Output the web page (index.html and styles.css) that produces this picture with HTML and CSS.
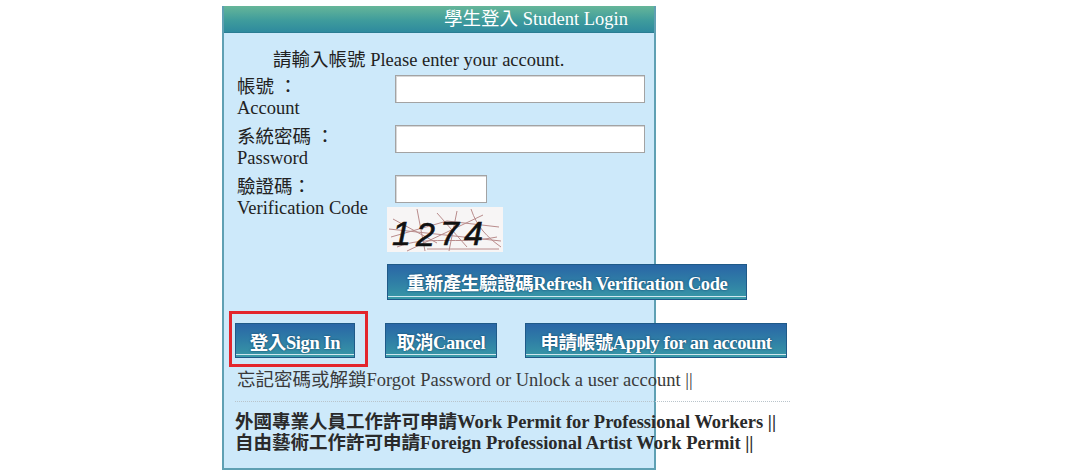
FILE: index.html
```html
<!DOCTYPE html>
<html>
<head>
<meta charset="utf-8">
<title>學生登入 Student Login</title>
<link rel="stylesheet" href="styles.css">
</head>
<body>
<div class="panel">
  <div class="panel-head">學生登入 Student Login</div>
  <div class="panel-body">
    <div class="intro">請輸入帳號 Please enter your account.</div>
    <div class="form-row">
      <div class="label">帳號 ：<br>Account</div>
      <div class="field"><input class="text-input wide" type="text"></div>
    </div>
    <div class="form-row">
      <div class="label">系統密碼 ：<br>Password</div>
      <div class="field"><input class="text-input wide" type="password"></div>
    </div>
    <div class="form-row last">
      <div class="label">驗證碼：<br>Verification Code</div>
      <div class="field">
        <input class="text-input short" type="text">
        <svg class="captcha" width="116" height="45" viewBox="0 0 116 45">
          <rect width="116" height="45" fill="#f7f5f5"/>
          <g stroke="#b98c8c" stroke-width="1" fill="none">
            <path d="M4 30 L60 14 L112 20"/>
            <path d="M10 40 C40 28 70 38 110 30"/>
            <path d="M30 2 L38 44"/>
            <path d="M50 6 L80 40"/>
            <path d="M2 22 L114 34"/>
            <path d="M70 4 L62 44"/>
            <path d="M20 44 L96 8"/>
            <path d="M84 2 C90 20 100 30 114 40"/>
            <path d="M6 12 L50 36"/>
            <path d="M40 42 L112 42"/>
          </g>
          <g font-family="'Liberation Sans', sans-serif" font-style="italic" font-size="34" fill="#111" stroke="#111" stroke-width="0.6">
            <text x="5" y="38">1</text>
            <text x="29" y="39">2</text>
            <text x="53" y="38">7</text>
            <text x="77" y="38">4</text>
          </g>
        </svg>
        <button class="btn refresh" type="button">重新產生驗證碼Refresh Verification Code</button>
      </div>
    </div>
    <div class="btn-row">
      <span class="highlight"><button class="btn" type="button">登入Sign In</button></span>
      <button class="btn cancel" type="button">取消Cancel</button>
      <button class="btn apply" type="button">申請帳號Apply for an account</button>
    </div>
    <div class="forgot">忘記密碼或解鎖Forgot Password or Unlock a user account ||</div>
    <div class="divider"></div>
    <div class="links">
      <div>外國專業人員工作許可申請Work Permit for Professional Workers ||</div>
      <div>自由藝術工作許可申請Foreign Professional Artist Work Permit ||</div>
    </div>
  </div>
</div>
</body>
</html>
```

FILE: styles.css
```css
html, body {
  margin: 0;
  padding: 0;
  background: #ffffff;
}
body {
  font-family: "Liberation Serif", "Times New Roman", "Noto Sans CJK TC", serif;
  font-size: 18.5px;
  line-height: 21px;
  color: #222;
}
.panel {
  margin: 6px 0 0 222px;
  width: 430px;
  border: 2px solid #5fa0b3;
  border-top: 0;
  background: #cde9fa;
}
.panel-head {
  height: 26px;
  line-height: 27px;
  border-bottom: 1px solid #2a7d93;
  background: linear-gradient(#66b699, #3f9c9c 55%, #2e8a9e);
  color: #fff;
  text-align: right;
  padding-right: 26px;
}
.panel-body {
  padding: 17px 0 14px 13px;
}
.intro {
  padding-left: 36px;
  margin-bottom: 4px;
}
.form-row {
  display: flex;
  height: 50px;
}
.form-row.last {
  height: auto;
}
.label {
  width: 150px;
  flex: none;
  padding-top: 2px;
  white-space: nowrap;
}
.field {
  display: flex;
  flex-direction: column;
  align-items: flex-start;
}
.text-input {
  box-sizing: border-box;
  height: 28px;
  margin: 0 0 0 8px;
  border: 1px solid #a3a3a3;
  box-shadow: inset 1px 1px 0 #d8d8d8;
  background: #fff;
}
.text-input.wide { width: 250px; }
.text-input.short { width: 92px; }
.captcha {
  display: block;
  margin-top: 4px;
}
.btn {
  box-sizing: border-box;
  height: 35px;
  padding: 0 8px;
  border: 1px solid #1f5a88;
  background: linear-gradient(#2a66a6, #2f7ea6 50%, #3898a6);
  box-shadow: inset 0 -2px 0 #3a9aa8, inset 0 -3px 0 #cfe6ee;
  color: #fff;
  font-family: "Liberation Serif", "Times New Roman", "Noto Sans CJK TC", serif;
  font-size: 18.5px;
  font-weight: bold;
  letter-spacing: -0.4px;
  text-shadow: 0 0 2px #0d3a60;
  white-space: nowrap;
  cursor: pointer;
}
.btn.refresh {
  margin-top: 12px;
  height: 36px;
  width: 360px;
}
.btn-row {
  display: flex;
  align-items: flex-start;
  margin-top: 11px;
  width: 600px;
}
.highlight {
  display: block;
  margin-left: -8px;
  padding: 9px 10px 6px 3px;
  border: 3px solid #e3262d;
}
.highlight .btn {
  display: block;
  width: 120px;
}
.btn.cancel {
  margin: 12px 0 0 17px;
  width: 112px;
}
.btn.apply {
  margin: 12px 0 0 28px;
  width: 262px;
}
.forgot {
  margin-top: 3px;
  color: #3a3a3a;
  white-space: nowrap;
}
.divider {
  margin: 10px 0 0 -2px;
  width: 555px;
  border-top: 1px dotted #b9c4cb;
}
.links {
  margin: 10px 0 0 -2px;
  font-weight: bold;
  color: #2a2a2a;
  white-space: nowrap;
}
```
